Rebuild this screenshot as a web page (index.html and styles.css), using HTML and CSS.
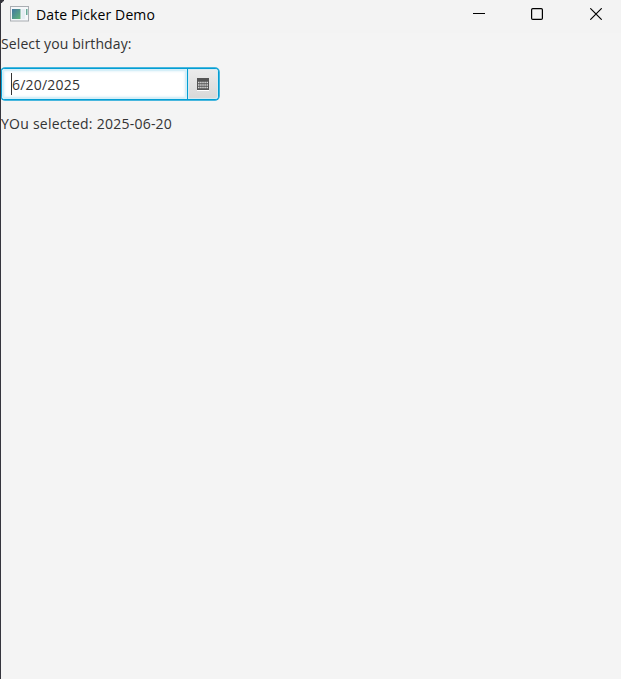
FILE: index.html
```
<!DOCTYPE html>
<html lang="en">
<head>
<meta charset="utf-8">
<title>Date Picker Demo</title>
<link rel="stylesheet" href="styles.css">
</head>
<body>
<div class="window">
  <header class="titlebar">
    <svg class="app-icon" width="20" height="16" viewBox="0 0 20 16">
      <defs><linearGradient id="g" x1="0" y1="0" x2="1" y2="1"><stop offset="0" stop-color="#4277a0"/><stop offset="1" stop-color="#62b678"/></linearGradient></defs>
      <rect x=".5" y=".5" width="18" height="14.5" fill="#f5f7f9" stroke="#a9adb2"/>
      <rect x="2" y="3" width="8.5" height="10" fill="url(#g)"/>
      <rect x="11.5" y="3" width="3.5" height="10" fill="#e5edf3"/>
      <rect x="16" y="3" width="1.5" height="6" fill="#68aa98"/>
    </svg>
    <h1 class="title"><span>Date Picker Demo</span></h1>
    <div class="controls">
      <svg width="12" height="12" viewBox="0 0 12 12"><path d="M0 5.5H12" stroke="#000"/></svg>
      <svg width="12" height="12" viewBox="0 0 12 12"><rect x=".6" y=".6" width="10.8" height="10.8" rx="1.2" fill="none" stroke="#000" stroke-width="1.2"/></svg>
      <svg width="12" height="12" viewBox="0 0 12 12"><path d="M.3.3l11.4 11.4M11.7.3L.3 11.7" stroke="#000" stroke-width="1.15"/></svg>
    </div>
  </header>
  <main class="content">
    <p class="label"><span class="prompt">Select you birthday:</span></p>
    <div class="picker">
      <div class="field"><i class="caret"></i><span class="value">6/20/2025</span></div>
      <div class="button">
        <svg width="12" height="13" viewBox="0 0 12 13">
          <path d="M0 12h12v1H0z" fill="#fff"/>
          <path d="M0 0h12v12H0z" fill="#555"/>
          <path d="M1 4.500h10M1 7h10M1 9.500h10" stroke="#d8d8d8" stroke-width="1.300" stroke-dasharray="1.500 .625"/>
        </svg>
      </div>
    </div>
    <p class="label result"><span class="selected">YOu selected: 2025-06-20</span></p>
  </main>
</div>
</body>
</html>
```
FILE: styles.css
```
* { box-sizing: border-box; }
body { margin: 0; background: #f4f4f4; font-family: "Open Sans", "Noto Sans", sans-serif; font-size: 14px; color: #333; }
.window { height: 679px; border-left: 1px solid #35353d; overflow: hidden; background: linear-gradient(#35353d, #35353d) 0 0 / 3px 3px no-repeat, #f4f4f4; }
.titlebar { height: 33px; display: flex; align-items: flex-start; background: #f3f3f3; padding-left: 9px; border-top-left-radius: 6px; }
.app-icon { margin-top: 6px; }
.title { margin: 5px 0 0 6px; font-size: 14px; line-height: 20px; font-weight: 400; letter-spacing: .12px; color: #000; white-space: nowrap; }
.controls { margin: 8px 19px 0 auto; display: flex; gap: 46px 46.500px; }
.controls svg:nth-child(2) { margin: 0 1px 0 -1px; }
.label { margin: 0; height: 20px; line-height: 20px; white-space: nowrap; }
.prompt { letter-spacing: .11px; }
.selected { letter-spacing: .24px; }
.content { padding-top: 1px; }
.picker { display: flex; width: 218px; height: 32px; margin-top: 14px; border: 1px solid #039ed3; border-radius: 4px; background: #d9eff7; box-shadow: 0 0 0 .5px #039ed3, 0 0 0 1px #8fd1e8; }
.field { width: 185px; display: flex; align-items: center; padding: 1px 0 0 9px; background: #fff; border-radius: 3px; box-shadow: inset 0 0 0 2px #d5eff8, inset 0 0 2px 3px #e9f6fb; }
.caret { width: 1px; height: 22px; margin-top: -1px; background: #333; }
.value { white-space: nowrap; line-height: 22px; letter-spacing: .2px; }
.button { flex: 1; display: flex; align-items: center; justify-content: center; border-left: 1px solid #039ed3; border-radius: 0 3px 3px 0; background: linear-gradient(#ececec, #d8d8d8); box-shadow: inset 0 0 0 1px #d5ebf3; }
.result { margin-top: 14px; }
```
